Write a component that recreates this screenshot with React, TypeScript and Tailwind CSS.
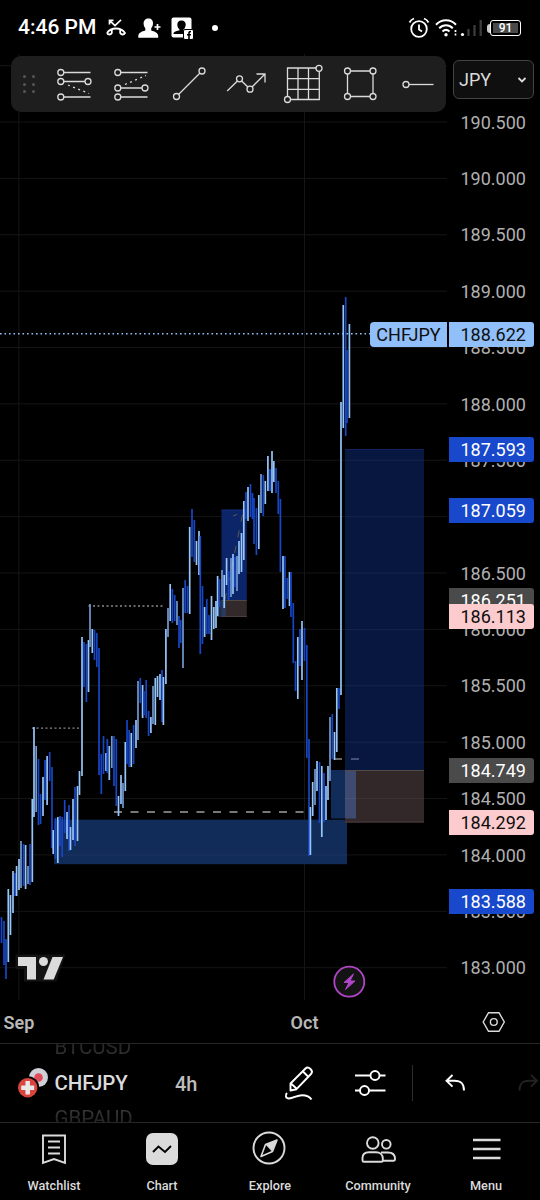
import type { ReactNode } from 'react'

type BarKind = 'u' | 'm' | 'd'
type Bar = [number, number, number, BarKind]

// x, high, low, kind
const bars: Bar[] = [
  [1.5, 917, 943, 'd'], [4, 921, 965, 'd'], [6, 939, 979, 'd'], [8.3, 889, 962, 'u'], [10.5, 895, 935, 'u'],
  [13, 871, 913, 'u'], [15, 873, 896, 'd'], [16.6, 866, 896, 'u'], [19, 859, 890, 'u'], [21, 841, 888, 'm'],
  [23.5, 844, 886, 'd'], [25.6, 845, 889, 'u'], [28, 866, 884, 'm'], [30, 844, 885, 'd'], [32.3, 799, 882, 'u'],
  [34, 727, 817, 'u'], [36.2, 746, 812, 'm'], [38.5, 759, 825, 'd'], [40.6, 794, 824, 'd'], [43, 777, 816, 'u'],
  [45, 760, 800, 'd'], [47.1, 756, 805, 'u'], [49.7, 752, 781, 'd'], [52, 767, 848, 'd'], [53.2, 830, 854, 'u'],
  [55.5, 818, 859, 'd'], [57.8, 817, 863, 'u'], [60, 816, 846, 'd'], [62.2, 817, 857, 'd'], [64.7, 800, 833, 'd'],
  [67, 812, 839, 'u'], [69, 805, 851, 'd'], [70.5, 827, 850, 'u'], [73, 799, 840, 'u'], [75, 787, 846, 'd'],
  [77.5, 786, 841, 'u'], [79.5, 771, 795, 'u'], [82, 637, 776, 'u'], [84, 642, 687, 'd'], [86.4, 644, 702, 'd'],
  [88.5, 640, 692, 'u'], [90, 604, 647, 'm'], [92.3, 629, 653, 'u'], [94.5, 630, 660, 'd'], [96.8, 633, 667, 'd'],
  [99, 648, 775, 'd'], [101.3, 754, 794, 'd'], [103.5, 736, 774, 'd'], [106, 753, 771, 'u'], [107.3, 739, 773, 'd'],
  [109.3, 746, 780, 'u'], [111.8, 736, 768, 'm'], [114, 736, 786, 'd'], [116.3, 739, 806, 'd'], [118.5, 796, 816, 'u'],
  [121, 775, 804, 'u'], [123, 783, 808, 'm'], [125.3, 742, 791, 'u'], [127, 720, 764, 'd'], [129.2, 730, 767, 'd'],
  [131.3, 733, 767, 'u'], [133.6, 725, 764, 'd'], [136, 720, 748, 'u'], [138, 681, 740, 'm'], [140.3, 678, 703, 'd'],
  [142.6, 685, 718, 'u'], [144, 691, 715, 'd'], [146.2, 680, 718, 'd'], [148.6, 711, 736, 'd'], [150.9, 717, 733, 'u'],
  [153, 686, 724, 'm'], [155.3, 678, 725, 'u'], [157.5, 676, 697, 'u'], [160, 674, 700, 'u'], [162, 670, 722, 'd'],
  [163.4, 677, 725, 'u'], [165.9, 629, 684, 'u'], [168, 608, 637, 'm'], [170.2, 584, 621, 'u'], [172.4, 589, 623, 'd'],
  [174.7, 595, 621, 'd'], [177, 601, 625, 'm'], [179, 616, 648, 'd'], [180.7, 620, 643, 'd'], [183, 588, 668, 'm'],
  [185.2, 580, 613, 'd'], [187.5, 586, 613, 'd'], [189.7, 527, 614, 'u'], [192, 509, 557, 'd'], [194.3, 520, 562, 'd'],
  [196.5, 541, 565, 'u'], [199, 531, 575, 'u'], [200.3, 536, 654, 'd'], [202.5, 586, 644, 'd'], [204.6, 607, 637, 'u'],
  [206.8, 599, 634, 'd'], [209, 615, 634, 'd'], [211.5, 596, 640, 'u'], [213.8, 607, 629, 'u'], [216, 601, 628, 'u'],
  [217.6, 576, 616, 'u'], [219.5, 579, 607, 'd'], [222, 570, 597, 'm'], [224.2, 575, 608, 'u'], [226.6, 558, 585, 'u'],
  [228.6, 571, 600, 'd'], [231, 558, 597, 'm'], [233, 554, 594, 'u'], [235, 557, 587, 'd'], [237, 556, 591, 'm'],
  [239, 541, 574, 'u'], [241.5, 533, 572, 'u'], [243.8, 501, 560, 'u'], [246, 492, 519, 'd'], [248, 487, 521, 'u'],
  [250.5, 484, 517, 'd'], [252.5, 493, 519, 'd'], [254, 498, 544, 'd'], [256.4, 508, 555, 'd'], [258.8, 495, 549, 'u'],
  [261, 474, 513, 'm'], [263.3, 475, 516, 'd'], [265.3, 481, 504, 'u'], [267.9, 456, 491, 'u'], [270, 469, 491, 'd'],
  [272, 451, 493, 'u'], [273.8, 461, 482, 'u'], [276, 468, 493, 'd'], [278.3, 481, 514, 'd'], [280.4, 499, 572, 'd'],
  [283, 556, 609, 'u'], [285, 556, 608, 'd'], [287.3, 578, 599, 'd'], [289.5, 572, 606, 'u'], [291, 572, 617, 'd'],
  [293.3, 603, 663, 'd'], [295.5, 661, 691, 'd'], [297.8, 637, 699, 'u'], [300, 629, 666, 'd'], [302, 621, 680, 'u'],
  [304.5, 628, 661, 'd'], [306.8, 645, 758, 'd'], [309, 739, 856, 'd'], [310.4, 807, 855, 'u'], [312.7, 782, 816, 'u'],
  [315, 769, 805, 'm'], [317, 761, 791, 'u'], [319.5, 762, 823, 'd'], [321.8, 766, 837, 'u'], [324, 773, 822, 'd'],
  [326, 786, 820, 'u'], [328, 766, 800, 'u'], [330, 717, 781, 'm'], [332.3, 714, 759, 'd'], [334.5, 732, 760, 'u'],
  [336.8, 688, 752, 'u'], [339, 688, 709, 'd'], [341, 402, 695, 'u'], [343.3, 305, 428, 'u'], [345.7, 297, 436, 'd'],
  [347, 350, 423, 'd'], [349.4, 324, 418, 'u'],
]

const barColors = { u: '#96c6fb', m: '#7399cf', d: '#1847c6' }

const prices = [
  '190.500', '190.000', '189.500', '189.000', '188.500', '188.000', '187.500', '187.000', '186.500',
  '186.000', '185.500', '185.000', '184.500', '184.000', '183.500', '183.000',
]

const tags = [
  { value: '188.622', style: 'top-[267.500px] bg-[#90bff9] text-[#0f0f0f]' },
  { value: '187.593', style: 'top-[383px] bg-[#1848cc] text-white' },
  { value: '187.059', style: 'top-[443.500px] bg-[#1848cc] text-white' },
  { value: '186.251', style: 'top-[534px] bg-[#4a4a4a] text-white' },
  { value: '186.113', style: 'top-[550px] bg-[#fccbcd] text-[#0f0f0f]' },
  { value: '184.749', style: 'top-[704px] bg-[#4a4a4a] text-white' },
  { value: '184.292', style: 'top-[755.500px] bg-[#fccbcd] text-[#0f0f0f]' },
  { value: '183.588', style: 'top-[835px] bg-[#1848cc] text-white' },
]

const StatusBar = () => (
  <header className="flex h-[54px] items-center pt-[2px] text-white">
    <span className="ml-[18px] w-[86px] text-[21px] font-medium whitespace-nowrap">4:46 PM</span>
    {/* Missed call */}
    <svg className="ml-px h-[20px] w-[22px]" viewBox="0 0 22 20" fill="none" stroke="#fff" strokeWidth="1.7">
      <path d="M4.5 6.500V2.300h4M5 2.800l5 4.700 6-5.700" />
      <path d="M2 15c4-6 14-6 18 0-1.200 2-3.500 2-4.800 0v-3M6.800 12v3c-1.300 2-3.600 2-4.800 0" strokeWidth="1.800" strokeLinejoin="round" />
    </svg>
    {/* Contact added */}
    <svg className="ml-[11px] h-[22px] w-[23px]" viewBox="0 0 23 22" fill="#fff">
      <path d="M10.500 1.500c3 0 4.700 2.100 4.500 5-.1 2-.8 3.500-1.800 4.800v2.200c3.500 1 6.800 2.200 7 5.500v1.700H.3V19c.2-3.300 3.500-4.500 7-5.500v-2.200C6.300 10 5.700 8.500 5.600 6.500c-.1-2.900 1.900-5 4.900-5z" />
      <path d="M19.500 7v6M16.500 10h6" stroke="#fff" strokeWidth="1.700" />
    </svg>
    {/* Facebook contact */}
    <svg className="ml-[10px] h-[24px] w-[23px]" viewBox="0 0 23 24">
      <rect x="0.500" y="1.500" width="20" height="20" rx="2" fill="#fff" />
      <path d="M10.500 4.500c2.800 0 4.300 1.700 4.200 4.200-.1 2-1 3.800-2.200 4.800v1.500l5 3H2.500v-1c1-1.500 3.500-2 6-2.700v-1C7.200 12.300 6.400 10.700 6.300 8.700c-.1-2.500 1.400-4.200 4.200-4.200z" fill="#000" />
      <rect x="12.500" y="13.500" width="10" height="10" rx="1.500" fill="#fff" stroke="#000" strokeWidth="1" />
      <path d="M18 23v-6q0-1.500 2-1.500M16 18.800h4" fill="none" stroke="#000" strokeWidth="1.600" />
    </svg>
    <span className="ml-[18px] size-[6px] rounded-full bg-white" />
    {/* Alarm */}
    <svg className="ml-auto h-[22px] w-[22px]" viewBox="0 0 22 22" fill="none" stroke="#fff" strokeWidth="1.800">
      <circle cx="11" cy="12" r="7.800" />
      <path d="M11 7.500v5l3 2M1.500 5.500C2.500 3.500 4 2.200 6 1.500M20.500 5.500C19.500 3.500 18 2.200 16 1.500" />
    </svg>
    {/* Wifi */}
    <svg className="ml-[5px] h-[20px] w-[23px]" viewBox="0 0 23 20" fill="none" stroke="#fff" strokeWidth="2">
      <path d="M1 6.800c5.500-6 14.500-6 20 0M4.200 10.300c4-4 9.600-4 13.600 0M7.500 13.500c2.200-2 4.800-2 7 0" />
      <circle cx="11" cy="16.800" r="1.700" fill="#fff" stroke="none" />
      <path d="M20.500 12v2M20.500 15.500v2" strokeWidth="1.700" />
    </svg>
    {/* Signal */}
    <svg className="ml-px h-[20px] w-[24px]" viewBox="0 0 24 20">
      <circle cx="3.500" cy="16.500" r="1.600" fill="#fff" />
      <path d="M9.500 18v-7M15.500 18V7M21.700 18V2" stroke="#3c3c3c" strokeWidth="2.300" />
    </svg>
    {/* Battery */}
    <div className="mr-[19px] ml-[4px] flex items-center">
      <span className="h-[9px] w-[3px] rounded-l-sm bg-[#ccc]" />
      <div className="flex h-[16px] w-[31px] items-center justify-center rounded-[3px] border border-white p-[2px]">
        <span className="flex h-full w-full items-center justify-center bg-[#4a4a4a] text-[12px] leading-none font-medium">91</span>
      </div>
    </div>
  </header>
)

const ToolIcon = ({ children }: { children: ReactNode }) => (
  <svg className="h-[56px] w-[57px] shrink-0" viewBox="0 0 57 56" fill="none" stroke="#dbdbdb" strokeWidth="1.300">
    {children}
  </svg>
)

const Dot = ({ x, y }: { x: number; y: number }) => <circle cx={x} cy={y} r="3" fill="#1e1e1e" />

const DrawingToolbar = () => (
  <div className="absolute top-[2px] left-[11px] flex h-[56px] w-[435px] items-center rounded-[10px] bg-[#1e1e1e]">
    <div className="grid w-[35px] shrink-0 grid-cols-[3px_3px] justify-center gap-x-[6px] gap-y-[4.500px]">
      {[0, 1, 2, 3, 4, 5].map((i) => (
        <span key={i} className="size-[3px] rounded-full bg-[#575757]" />
      ))}
    </div>
    <ToolIcon>
      <path d="M14.800 16.500H44.500M14.800 25.500H42M14.800 41H44.500" />
      <path d="M22 29L43 37.500" strokeDasharray="2 3.500" />
      <Dot x={14.8} y={16.5} />
      <Dot x={14.8} y={25.5} />
      <Dot x={42} y={25.5} />
      <Dot x={14.8} y={41} />
    </ToolIcon>
    <ToolIcon>
      <path d="M14.800 16.500H44.500M14.800 32H42M14.800 41H44.500" />
      <path d="M22 28.500L43 19.500" strokeDasharray="2 3.500" />
      <Dot x={14.8} y={16.5} />
      <Dot x={14.8} y={32} />
      <Dot x={42} y={32} />
      <Dot x={14.8} y={41} />
    </ToolIcon>
    <ToolIcon>
      <path d="M16.500 40.500L42 15" />
      <Dot x={16.5} y={40.5} />
      <Dot x={42} y={15} />
    </ToolIcon>
    <ToolIcon>
      <path d="M10.200 35L22.500 23L33 33L48 18M39.500 18H48V26.500" />
      <Dot x={22.5} y={22.8} />
      <Dot x={33} y={33.2} />
    </ToolIcon>
    <ToolIcon>
      <path d="M13.500 12H45.300V43.500H13.500ZM24 12V43.500M34.500 12V43.500M13.500 22.700H45.300M13.500 33.300H45.300" />
      <Dot x={45} y={12.3} />
      <Dot x={13.5} y={43.5} />
    </ToolIcon>
    <ToolIcon>
      <path d="M16.500 15H42V40.500H16.500Z" />
      <Dot x={16.5} y={15} />
      <Dot x={42} y={15} />
      <Dot x={16.5} y={40.5} />
      <Dot x={42} y={40.5} />
    </ToolIcon>
    <ToolIcon>
      <path d="M18 28.500H45.500" />
      <Dot x={18} y={28.5} />
    </ToolIcon>
  </div>
)

const ChartCanvas = () => (
  <svg className="block h-[946px] w-[448px]" viewBox="0 54 448 946">
    {/* Grid */}
    <g stroke="#151515" strokeWidth="1">
      {Array.from({ length: 17 }, (_, i) => (
        <line key={i} x1="0" x2="447" y1={65.6 + i * 56.38} y2={65.6 + i * 56.38} />
      ))}
      <line x1="18.800" x2="18.800" y1="54" y2="1000" />
      <line x1="304.500" x2="304.500" y1="54" y2="1000" />
    </g>

    {/* Demand zones */}
    <rect x="54" y="819.700" width="293" height="44.500" fill="#122c5a" />
    <rect x="331" y="770" width="25" height="48.500" fill="#122c5a" />
    <path d="M54 855H347" stroke="#1a3360" />

    {/* Short closed position */}
    <rect x="221.500" y="510" width="25.300" height="90.500" fill="#0c2468" />
    <path d="M221.500 510H246.800" stroke="#15337f" />
    <rect x="221.500" y="600.500" width="25.300" height="16.500" fill="#33292b" />
    <rect x="217" y="600.500" width="9" height="16.500" fill="#26406f" opacity="0.700" />
    <path d="M221.500 600.500H246.800" stroke="#4d4a44" />
    <path d="M221.500 616.500H246.800" stroke="#4c3d3f" />
    <path d="M225 600L243 512L233 516" fill="none" stroke="#5d5b4e" strokeDasharray="7 9" />

    {/* Open position */}
    <rect x="345" y="449" width="79" height="321" fill="#08173f" />
    <path d="M345 449.500H424" stroke="#10255f" />
    <rect x="345" y="770" width="79" height="52.500" fill="#332829" />
    <rect x="345" y="770" width="11" height="48.500" fill="#3f4a70" />
    <path d="M345 770.500H424" stroke="#504d48" />
    <path d="M345 822H424" stroke="#4c3d3f" />
    <g stroke="#ffffff" strokeOpacity="0.060">
      <path d="M345 460.300H424M345 516.700H424M345 573H424M345 629.400H424M345 685.800H424M345 742.200H424M345 798.600H424" />
    </g>

    {/* Levels */}
    <path d="M32 728.200H79M88.500 606H163" stroke="#8a8a8a" strokeWidth="1.300" strokeDasharray="2 2.500" />
    <path d="M114 812H304" stroke="#a0a0a0" strokeWidth="1.300" strokeDasharray="8 8.500" />
    <path d="M334 759H342" stroke="#a0a0a0" strokeWidth="1.300" />
    <path d="M351 759H359" stroke="#66709a" strokeWidth="1.300" />

    {bars.map(([x, high, low, kind], i) => (
      <line key={i} x1={x} x2={x} y1={high} y2={low} stroke={barColors[kind]} strokeWidth="1.700" />
    ))}

    <path d="M0 333.700H371" stroke="#90bff9" strokeWidth="1.500" strokeDasharray="1.600 2.900" />

    {/* Logo */}
    <path d="M17.500 956.500H62.500L55 979.500H26V967H17.500Z" fill="#131313" stroke="#131313" strokeWidth="4" />
    <g fill="#dbdbdb">
      <path d="M18 957H36V979.500H27V966H18Z" />
      <circle cx="43.500" cy="961.500" r="4.500" />
      <path d="M52.500 957H63L53.700 979.500H43.500Z" />
    </g>

    {/* Event marker */}
    <circle cx="349.300" cy="981.700" r="15" fill="#131313" stroke="#b045c8" strokeWidth="1.800" />
    <path d="M353.500 974L344 982.500H349L345.500 989.500L355 981H350Z" fill="#b045c8" stroke="#b045c8" strokeLinejoin="round" />
  </svg>
)

const PriceScale = () => (
  <div className="relative w-[92px]">
    <div className="mt-[40px] flex flex-col">
      {prices.map((price) => (
        <span key={price} className="flex h-[56.380px] shrink-0 items-center pl-[12.500px] text-[18px] text-[#b0b0b0]">
          {price}
        </span>
      ))}
    </div>
    {tags.map((tag) => (
      <span
        key={tag.value}
        className={`absolute left-px flex h-[25px] w-[85px] items-center rounded-r-[3px] pl-[11.500px] text-[18px] ${tag.style}`}
      >
        {tag.value}
      </span>
    ))}
    <button className="absolute top-[6px] left-[5px] flex h-[39px] w-[81px] items-center justify-between rounded-[6px] border-[1.500px] border-[#444] bg-[#0f0f0f] pr-[6px] pl-[5px] text-[18px] text-[#dbdbdb]">
      JPY
      <svg className="h-[8px] w-[10px]" viewBox="0 0 10 8" fill="none" stroke="#dbdbdb" strokeWidth="1.800">
        <path d="M1.500 2L5 5.500L8.500 2" />
      </svg>
    </button>
  </div>
)

const TimeScale = () => (
  <div className="flex h-[43px] shrink-0 items-center pt-px text-[18px] font-semibold text-[#b8b8b8]">
    <span className="w-[38px] text-center">Sep</span>
    <span className="ml-[248px] w-[37px] text-center">Oct</span>
    <svg className="ml-[159px] h-[22px] w-[24px]" viewBox="0 0 24 22" fill="none" stroke="#dbdbdb" strokeWidth="1.400">
      <path d="M6.500 1.700H17L22.300 11L17 20.300H6.500L1.200 11Z" />
      <circle cx="11.800" cy="11" r="3.400" />
    </svg>
  </div>
)

const SymbolBar = () => (
  <div className="flex h-[79px] shrink-0 items-center overflow-hidden border-t-[1.500px] border-[#262626] text-[#dbdbdb]">
    <svg className="ml-[17px] h-[32px] w-[32px] shrink-0" viewBox="0 0 32 32">
      <circle cx="21.500" cy="10.500" r="9.500" fill="#d0d0d8" />
      <circle cx="21.500" cy="10.500" r="4.300" fill="#e04a5a" />
      <circle cx="10.700" cy="20.700" r="11.500" fill="#000" />
      <circle cx="10.700" cy="20.700" r="9.700" fill="#d9443f" />
      <path d="M10.700 14V27.500M4.200 20.700H17.200" stroke="#e8e8e8" strokeWidth="4.500" />
    </svg>
    <div className="ml-[5.500px] flex w-[120.500px] shrink-0 flex-col pt-px text-[20.500px] leading-[35.500px]">
      <span className="bg-linear-to-b from-[#111] to-[#444] bg-clip-text text-transparent">BTCUSD</span>
      <span className="font-medium tracking-[-0.100px]">CHFJPY</span>
      <span className="bg-linear-to-b from-[#444] to-[#111] bg-clip-text text-transparent">GBPAUD</span>
    </div>
    <span className="w-[107px] shrink-0 pt-px text-[20px] font-medium text-[#bdbdbd]">4h</span>
    {/* Draw */}
    <svg className="ml-[2px] h-[38px] w-[32px] shrink-0" viewBox="0 0 32 38" fill="none" stroke="#fff" strokeWidth="1.900" strokeLinejoin="round">
      <path d="M6.500 26.500V19.500L21.500 4.500C24.500 1.500 30 7 27 10L12.500 25.200L6.500 26.500ZM7 19.500L13 25M19 7.500L24.500 13" />
      <path d="M3 29C1 31 1.500 34.500 5 34.500C9 34.500 13 31.200 18 31.200C22 31.200 25.500 32 27.500 35.500" />
    </svg>
    {/* Settings */}
    <svg className="ml-[38px] h-[28px] w-[32px] shrink-0" viewBox="0 0 32 28" fill="none" stroke="#fff" strokeWidth="1.900">
      <path d="M1 6.500H16.300M25.500 6.500H31.500M1 21.500H6M15 21.500H31.500" />
      <circle cx="21" cy="6.500" r="4.500" />
      <circle cx="10.500" cy="21.500" r="4.500" />
    </svg>
    <span className="ml-[26px] h-[36px] w-px shrink-0 bg-[#2e2e2e]" />
    <svg className="ml-[32px] h-[18px] w-[21px] shrink-0" viewBox="0 0 21 18" fill="none" stroke="#fff" strokeWidth="1.900">
      <path d="M7.500 1L1.500 6.800L7.500 12.600M1.500 6.800H9.500C16.500 6.800 19 10 19 16.500" />
    </svg>
    <svg className="ml-[52px] h-[18px] w-[21px] shrink-0" viewBox="0 0 21 18" fill="none" stroke="#222" strokeWidth="1.900">
      <path d="M13 1L19 6.800L13 12.600M19 6.800H11C4 6.800 1.500 10 1.500 16.500" />
    </svg>
  </div>
)

const NavItem = ({ label, children }: { label: string; children: ReactNode }) => (
  <a className="flex flex-1 flex-col items-center">
    <svg className="mt-[8px] h-[36px] w-[36px]" viewBox="0 0 36 36" fill="none" stroke="#dbdbdb" strokeWidth="1.900">
      {children}
    </svg>
    <span className="mt-[9px] text-[12.700px] leading-[20px] font-medium text-[#dbdbdb]">{label}</span>
  </a>
)

const BottomNav = () => (
  <nav className="flex h-[78px] shrink-0 border-t-[1.500px] border-[#262626]">
    <NavItem label="Watchlist">
      <path d="M7 4.500H29V32L18 28L7 32ZM12 10.500H24M12 16.500H24M12 22.500H24" />
    </NavItem>
    <NavItem label="Chart">
      <rect x="2" y="2" width="32" height="32" rx="7" fill="#dbdbdb" stroke="none" />
      <path d="M9 21L14.500 15.500L21 21L27 15" stroke="#000" />
    </NavItem>
    <NavItem label="Explore">
      <circle cx="17" cy="17" r="15.500" />
      <path d="M25 9L13.500 13.500L9 25.500L20.500 20.500Z" strokeLinejoin="round" strokeWidth="1.600" />
      <path d="M25 9L13.500 13.500L20 20.500Z" fill="#dbdbdb" stroke="none" />
    </NavItem>
    <NavItem label="Community">
      <circle cx="12.800" cy="12" r="5.800" />
      <circle cx="26.300" cy="13.300" r="4.300" />
      <path d="M2.500 29.500V27C2.500 22.500 6 21.200 9 21.200H16C20 21.200 22.800 23.500 22.800 27.500V29.500C22.800 30.500 22.500 30.800 21.500 30.800H4C3 30.800 2.500 30.500 2.500 29.500Z" />
      <path d="M21 21.500H28C32 21.500 35 23.500 35 28C35 29.300 34.500 29.800 33.300 29.800H22.800" />
    </NavItem>
    <NavItem label="Menu">
      <path d="M5 9H32.500M5 18H32.500M5 27H32.500" strokeWidth="2.700" />
    </NavItem>
  </nav>
)

const App = () => {
  return (
    <div className="flex h-[1200px] w-[540px] flex-col overflow-hidden bg-black font-['Roboto',sans-serif]">
      <StatusBar />
      <main className="relative flex h-[946px] shrink-0">
        <ChartCanvas />
        <PriceScale />
        <DrawingToolbar />
        <span className="absolute top-[267.500px] left-[370px] flex h-[25px] w-[77px] items-center justify-center rounded-l-[4px] bg-[#90bff9] text-[18px] text-[#0f0f0f]">
          CHFJPY
        </span>
      </main>
      <TimeScale />
      <SymbolBar />
      <BottomNav />
    </div>
  )
}

export default App
